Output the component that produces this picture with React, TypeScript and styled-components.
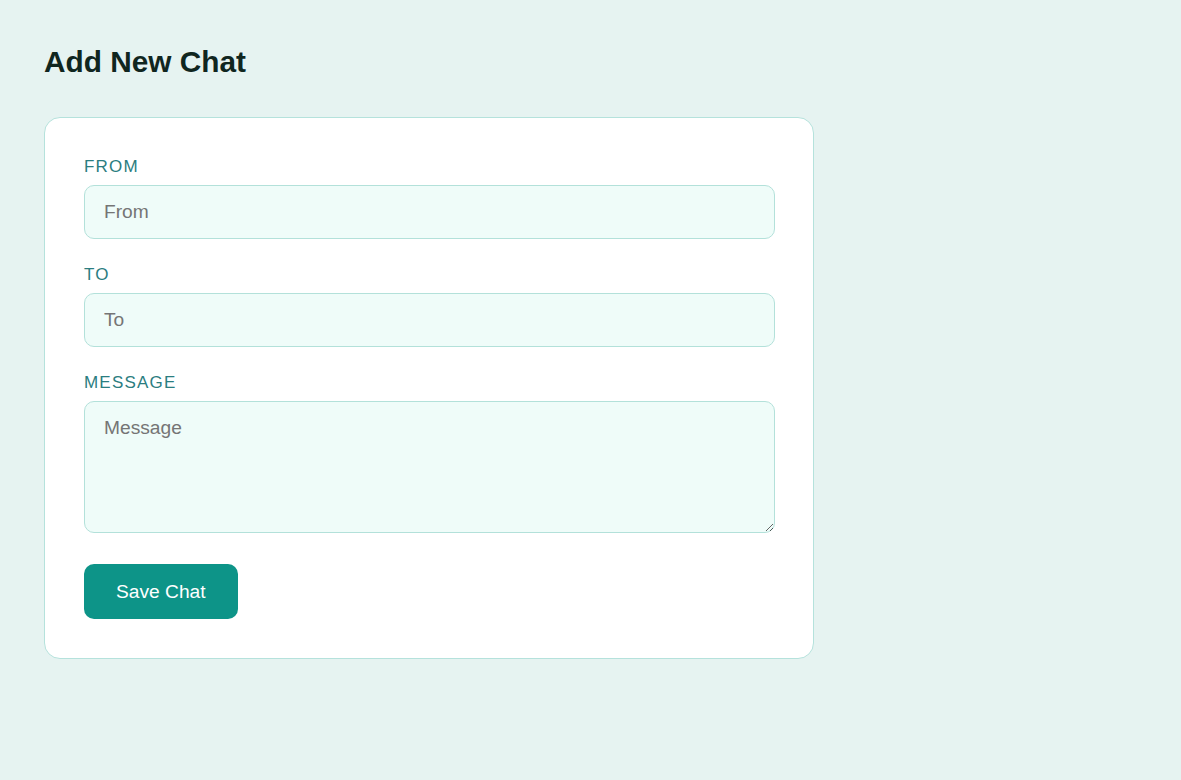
import React from "react";
import styled, { createGlobalStyle } from "styled-components";

const GlobalStyle = createGlobalStyle`
  html, body {
    margin: 0;
    padding: 0;
    background: #e6f3f1;
    font-family: "Liberation Sans", Arial, sans-serif;
  }
  * { box-sizing: border-box; }
`;

const Page = styled.main`
  min-height: 780px;
  padding: 45px 44px;
`;

const Title = styled.h1`
  margin: 0 0 38px;
  font-size: 29.8px;
  line-height: 34px;
  font-weight: 700;
  color: #10261f;
`;

const Card = styled.form`
  width: 770px;
  background: #ffffff;
  border: 1px solid #b5e2dc;
  border-radius: 16px;
  padding: 38px 38px 39px 39px;
  display: flex;
  flex-direction: column;
`;

const Field = styled.div<{ $last?: boolean }>`
  display: flex;
  flex-direction: column;
  margin-bottom: ${(p) => (p.$last ? "31px" : "25px")};
`;

const Label = styled.label`
  display: block;
  font-size: 17px;
  line-height: 22px;
  letter-spacing: 1.2px;
  text-transform: uppercase;
  color: #2b7d80;
  margin-bottom: 7px;
`;

const Input = styled.input`
  width: 100%;
  height: 54px;
  padding: 0 19px;
  font-family: "Liberation Sans", Arial, sans-serif;
  font-size: 19.2px;
  color: #1d2b28;
  background: #effcf9;
  border: 1px solid #b3e1da;
  border-radius: 10px;
  outline: none;
  &::placeholder { color: #757575; }
`;

const TextArea = styled.textarea`
  width: 100%;
  height: 132px;
  padding: 15px 19px;
  font-family: "Liberation Sans", Arial, sans-serif;
  font-size: 19.2px;
  line-height: 22px;
  color: #1d2b28;
  background: #effcf9;
  border: 1px solid #b3e1da;
  border-radius: 10px;
  outline: none;
  display: block;
  &::placeholder { color: #757575; }
`;

const Button = styled.button`
  align-self: flex-start;
  height: 55px;
  padding: 0 32px;
  font-family: "Liberation Sans", Arial, sans-serif;
  font-size: 19.2px;
  color: #ffffff;
  background: #0d9488;
  border: none;
  border-radius: 10px;
  cursor: pointer;
`;

export default function App() {
  return (
    <>
      <GlobalStyle />
      <Page>
        <Title>Add New Chat</Title>
        <Card onSubmit={(e) => e.preventDefault()}>
          <Field>
            <Label htmlFor="from">From</Label>
            <Input id="from" placeholder="From" />
          </Field>
          <Field>
            <Label htmlFor="to">To</Label>
            <Input id="to" placeholder="To" />
          </Field>
          <Field $last>
            <Label htmlFor="message">Message</Label>
            <TextArea id="message" placeholder="Message" />
          </Field>
          <Button type="submit">Save Chat</Button>
        </Card>
      </Page>
    </>
  );
}
